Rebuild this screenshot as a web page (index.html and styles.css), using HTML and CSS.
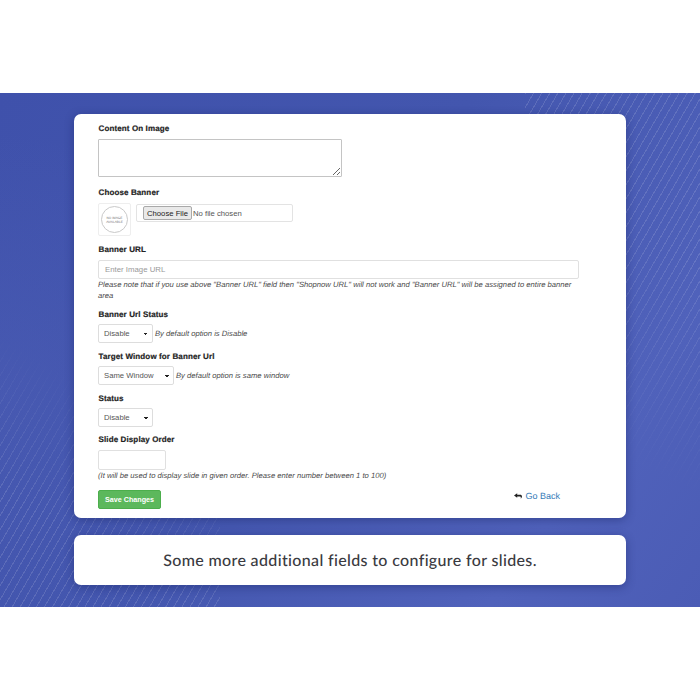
FILE: index.html
```html
<!DOCTYPE html>
<html lang="en">
<head>
<meta charset="utf-8">
<title>Slide settings</title>
<link rel="stylesheet" href="styles.css">
</head>
<body>
<main class="stage">
  <div class="stripes stripes-tr"></div>
  <div class="stripes stripes-bl"></div>
  <section class="card form-card">
    <form class="form">
      <div class="field field-content">
        <label class="label">Content On Image</label>
        <textarea class="textarea"></textarea>
      </div>
      <div class="field field-banner">
        <label class="label">Choose Banner</label>
        <div class="banner-row">
          <div class="thumb">
            <div class="thumb-circle"><span>NO IMAGE<br>AVAILABLE</span></div>
          </div>
          <div class="file-box"><input class="file" type="file"></div>
        </div>
      </div>
      <div class="field field-url">
        <label class="label">Banner URL</label>
        <input class="input input-full" type="text" placeholder="Enter Image URL">
        <p class="note note-block">Please note that if you use above "Banner URL" field then "Shopnow URL" will not work and "Banner URL" will be assigned to entire banner area</p>
      </div>
      <div class="field field-status">
        <label class="label">Banner Url Status</label>
        <div class="inline">
          <select class="select select-short"><option>Disable</option></select>
          <span class="note">By default option is Disable</span>
        </div>
      </div>
      <div class="field field-status">
        <label class="label">Target Window for Banner Url</label>
        <div class="inline">
          <select class="select select-long"><option>Same Window</option></select>
          <span class="note">By default option is same window</span>
        </div>
      </div>
      <div class="field field-status">
        <label class="label">Status</label>
        <div class="inline">
          <select class="select select-short"><option>Disable</option></select>
        </div>
      </div>
      <div class="field field-order">
        <label class="label">Slide Display Order</label>
        <input class="input input-order" type="text">
        <p class="note note-block">(It will be used to display slide in given order. Please enter number between 1 to 100)</p>
      </div>
      <div class="actions">
        <button class="save" type="button">Save Changes</button>
        <a class="back" href="#">
          <svg class="back-icon" viewBox="0 0 10 7" width="8" height="6" aria-hidden="true"><path d="M4 0 L0 2.9 L4 5.8 V4 H7.6 C8.2 4 8.5 4.4 8.5 5.2 V7 C9.5 6 10 5 10 3.9 C10 2.6 9 1.8 7.6 1.8 H4 Z" fill="#222"/></svg>
          <span>Go Back</span>
        </a>
      </div>
    </form>
  </section>
  <section class="card caption-card">
    <p class="caption">Some more additional fields to configure for slides.</p>
  </section>
</main>
</body>
</html>
```

FILE: styles.css
```css
* { box-sizing: border-box; }
html, body { margin: 0; padding: 0; background: #fff; }
body {
  height: 700px;
  padding-top: 93px;
  font-family: "Liberation Sans", Arial, sans-serif;
  text-rendering: geometricPrecision;
  overflow: hidden;
}
.stage {
  position: relative;
  height: 514px;
  padding: 21px 74px 0;
  overflow: hidden;
  background:
    radial-gradient(ellipse 260px 260px at 0px 300px, rgba(88, 104, 190, 0.28), rgba(88, 104, 190, 0) 100%),
    linear-gradient(125deg, #3f51ab 0%, #4356ae 45%, #5062bb 80%, #4b5cb5 100%);
}
.stripes {
  position: absolute;
  pointer-events: none;
  background: repeating-linear-gradient(120deg, rgba(255,255,255,0.13) 0 1px, rgba(255,255,255,0) 1px 7px);
}
.stripes-tr {
  top: 0; right: 0;
  width: 175px; height: 400px;
  -webkit-mask-image: linear-gradient(205deg, #000 35%, transparent 85%);
  mask-image: linear-gradient(205deg, #000 35%, transparent 85%);
}
.stripes-bl {
  left: 0; bottom: 0;
  width: 220px; height: 330px;
  -webkit-mask-image: linear-gradient(30deg, #000 25%, transparent 60%);
  mask-image: linear-gradient(30deg, #000 25%, transparent 60%);
}
.card {
  position: relative;
  width: 552px;
  background: #fff;
  border-radius: 7px;
  box-shadow: 0 2px 10px rgba(25, 35, 100, 0.45);
}
.form-card { height: 404px; padding: 9px 47px 0 24px; }
.caption-card {
  height: 50px;
  margin-top: 17px;
  display: flex;
  align-items: center;
  justify-content: center;
}
.caption {
  margin: 0;
  font-family: Lato, "Noto Sans", sans-serif;
  font-size: 16px;
  font-weight: 500;
  letter-spacing: 0.35px;
  color: #3a3a3f;
}
.form { display: flex; flex-direction: column; }
.field { display: flex; flex-direction: column; align-items: flex-start; }
.label {
  padding-left: 0.5px;
  font-size: 8px;
  line-height: 11px;
  font-weight: 700;
  letter-spacing: 0.12px;
  color: #222;
  -webkit-text-stroke: 0.2px #222;
}
.field-content .label { margin-bottom: 5px; }
.textarea {
  display: block;
  width: 244px;
  height: 38px;
  margin: 0;
  border: 1px solid #c4c4c4;
  border-radius: 1px;
  background: #fff;
  resize: vertical;
}
.field-banner { margin-top: 10px; }
.field-banner .label { margin-bottom: 5px; }
.banner-row { display: flex; align-items: flex-start; gap: 5px; }
.thumb {
  width: 33px;
  height: 33px;
  border: 1px solid #eee;
  border-radius: 2px;
  display: flex;
  align-items: center;
  justify-content: center;
}
.thumb-circle {
  width: 27px;
  height: 27px;
  border: 1px solid #c9c9c9;
  border-radius: 50%;
  display: flex;
  align-items: center;
  justify-content: center;
  text-align: center;
}
.thumb-circle span {
  font-size: 3.2px;
  line-height: 4px;
  color: #777;
}
.file-box {
  width: 157px;
  height: 18px;
  margin-top: 1px;
  border: 1px solid #e3e3e3;
  border-radius: 2px;
  display: flex;
  align-items: center;
  padding-left: 6px;
  overflow: hidden;
}
.file {
  width: 148px;
  font-family: "Liberation Sans", Arial, sans-serif;
  font-size: 7.7px;
  color: #555;
}
.file::file-selector-button {
  font-family: "Liberation Sans", Arial, sans-serif;
  font-size: 7.7px;
  height: 14px;
  padding: 0 3px;
  margin-right: 1px;
  color: #222;
  background: #e9e9e9;
  border: 1px solid #a9a9a9;
  border-radius: 2px;
}
.field-url { margin-top: 8px; }
.field-url .label { margin-bottom: 5px; }
.input {
  display: block;
  height: 19px;
  margin: 0;
  padding: 0 6px;
  border: 1px solid #e0e0e0;
  border-radius: 2px;
  background: #fff;
  font-family: "Liberation Sans", Arial, sans-serif;
  font-size: 7.8px;
  color: #555;
}
.input::placeholder { color: #999; opacity: 1; }
.input-full { width: 100%; }
.input-order { width: 68px; height: 20px; }
.note {
  font-size: 7.66px;
  line-height: 11px;
  font-style: italic;
  color: #4a4a4a;
}
.note-block { margin: 0; }
.field-status { margin-top: 8px; }
.field-status .label { margin-bottom: 4px; }
.inline { display: flex; align-items: center; gap: 2px; }
.select {
  -webkit-appearance: none;
  appearance: none;
  height: 19px;
  margin: 0;
  padding: 0 0 0 5px;
  border: 1px solid #ddd;
  border-radius: 2px;
  background-color: #fff;
  background-image:
    linear-gradient(45deg, transparent 50%, #222 50%),
    linear-gradient(-45deg, transparent 50%, #222 50%);
  background-size: 2px 2px, 2px 2px;
  background-position: right 6px center, right 4px center;
  background-repeat: no-repeat;
  font-family: "Liberation Sans", Arial, sans-serif;
  font-size: 7.7px;
  color: #555;
}
.select-short { width: 55px; }
.select-long { width: 76px; }
.field-order { margin-top: 7px; }
.field-order .label { margin-bottom: 5px; }
.actions {
  display: flex;
  justify-content: space-between;
  align-items: flex-start;
  margin-top: 9px;
}
.save {
  width: 63px;
  height: 19px;
  padding: 0;
  border: 1px solid #4cae4c;
  border-radius: 2px;
  background: #5cb85c;
  color: #fff;
  font-family: "Liberation Sans", Arial, sans-serif;
  font-size: 7.2px;
  font-weight: 700;
}
.back {
  display: flex;
  align-items: center;
  gap: 3px;
  margin-right: 19px;
  font-size: 9px;
  line-height: 12px;
  color: #337ab7;
  text-decoration: none;
}
```
